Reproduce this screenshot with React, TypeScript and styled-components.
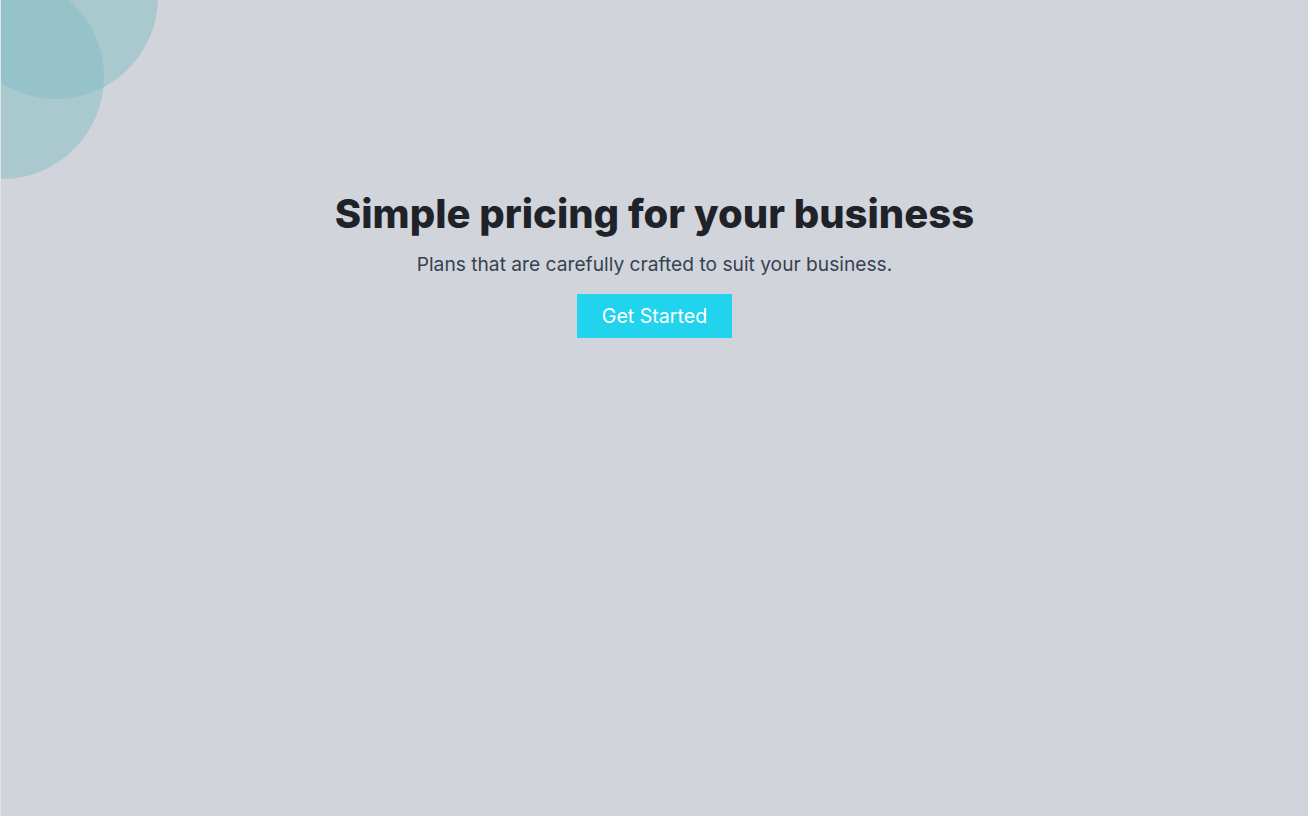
import React from "react";
import styled, { createGlobalStyle } from "styled-components";

const Global = createGlobalStyle`
  html, body { margin: 0; padding: 0; }
  body {
    background: #d1d5db;
    font-family: Inter, "Noto Sans", sans-serif;
    -webkit-font-smoothing: antialiased;
  }
`;

const Page = styled.div`
  position: relative;
  min-height: 816px;
  box-sizing: border-box;
  border-left: 1px solid #e2e4e8;
  overflow: hidden;
  display: flex;
  flex-direction: column;
  align-items: center;
  padding-top: 190px;
`;

const Blob = styled.div<{ $x: number; $y: number; $size: number }>`
  position: absolute;
  left: ${(p) => p.$x}px;
  top: ${(p) => p.$y}px;
  width: ${(p) => p.$size}px;
  height: ${(p) => p.$size}px;
  border-radius: 50%;
  background: rgba(128, 188, 195, 0.48);
  pointer-events: none;
`;

const Title = styled.h1`
  margin: 0;
  font-size: 40px;
  line-height: 48px;
  font-weight: 800;
  color: #1f2329;
  text-align: center;
`;

const Subtitle = styled.p`
  margin: 12px 0 0;
  font-size: 19.2px;
  line-height: 29px;
  color: #374151;
  text-align: center;
`;

const Button = styled.button`
  margin-top: 15px;
  height: 44px;
  width: 155px;
  padding: 0;
  border: none;
  background: #22d3ee;
  color: #ffffff;
  font-family: Inter, "Noto Sans", sans-serif;
  font-size: 19.6px;
  line-height: 28px;
  cursor: pointer;
`;

export default function App() {
  return (
    <>
      <Global />
      <Page>
        <Blob $x={-47} $y={-105} $size={204} />
        <Blob $x={-101} $y={-25} $size={204} />
        <Title>Simple pricing for your business</Title>
        <Subtitle>Plans that are carefully crafted to suit your business.</Subtitle>
        <Button>Get Started</Button>
      </Page>
    </>
  );
}
